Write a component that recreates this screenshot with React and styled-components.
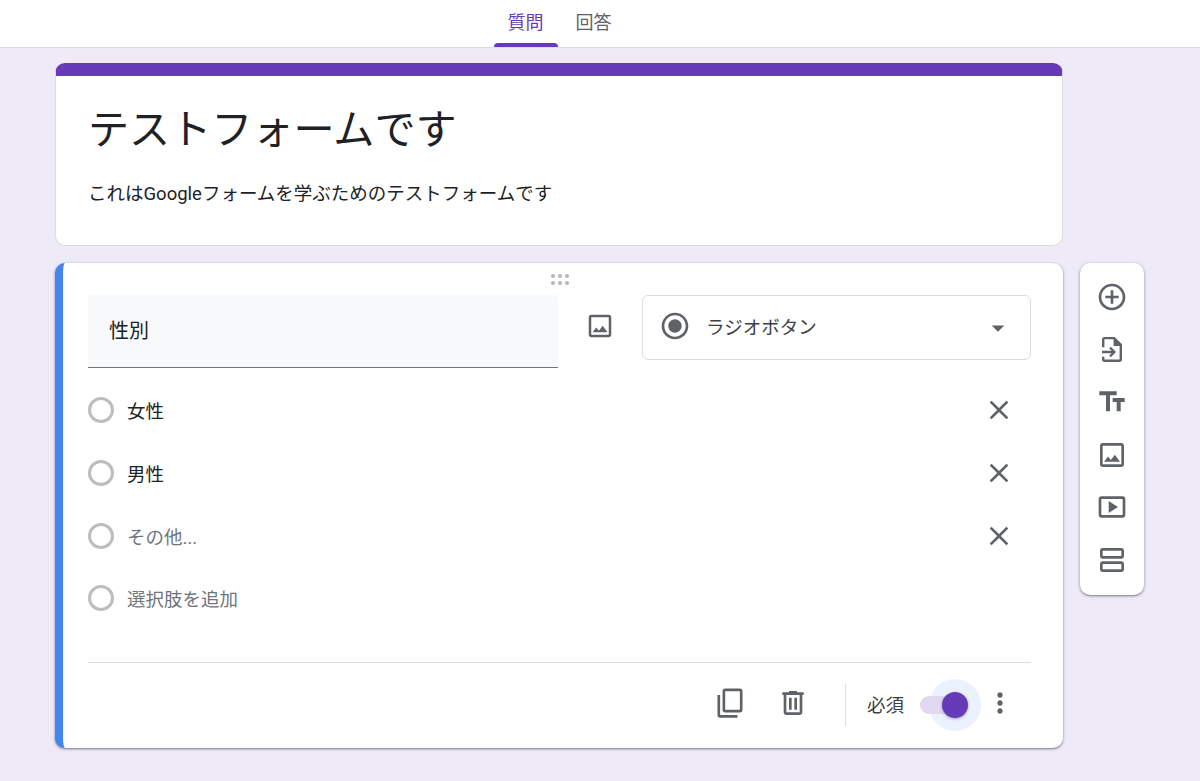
import React from 'react';
import styled, { createGlobalStyle } from 'styled-components';
import {
  MdAddCircleOutline,
  MdArrowDropDown,
  MdClose,
  MdMoreVert,
  MdOutlineImage,
  MdOutlineSmartDisplay,
  MdOutlineViewAgenda,
  MdRadioButtonChecked,
  MdTextFields,
} from 'react-icons/md';

const GlobalStyle = createGlobalStyle`
  html, body {
    margin: 0;
    height: 100%;
    background: #efeaf8;
    font-family: Roboto, "Noto Sans CJK JP", sans-serif;
    color: #202124;
    overflow: hidden;
  }
  * { box-sizing: border-box; }
`;

const Header = styled.header`
  height: 48px;
  background: #fff;
  border-bottom: 1px solid #dfdbe6;
  display: flex;
  justify-content: center;
  padding-right: 81px;
  gap: 4px;
`;

const Tab = styled.div`
  width: 64px;
  height: 47px;
  display: flex;
  justify-content: center;
  padding-top: 11px;
  font-size: 18px;
  line-height: 24px;
  position: relative;
  color: ${(p) => (p.$active ? '#673ab7' : '#5f6368')};
  ${(p) =>
    p.$active &&
    `&::after {
      content: "";
      position: absolute;
      left: 0;
      right: 0;
      bottom: 0;
      height: 4px;
      background: #673ab7;
      border-radius: 4px 4px 0 0;
    }`}
`;

const Page = styled.main`
  display: flex;
  align-items: flex-start;
  gap: 17px;
  padding: 15px 0 0 55px;
`;

const Column = styled.div`
  width: 1008px;
  display: flex;
  flex-direction: column;
  gap: 17px;
`;

const TitleCard = styled.section`
  height: 183px;
  background: #fff;
  border: 1px solid #dadce0;
  border-top: 13px solid #673ab7;
  border-radius: 10px;
  padding: 27px 32px 0;
`;

const FormTitle = styled.h1`
  margin: 0;
  font-size: 41.1px;
  line-height: 54px;
  font-weight: 400;
`;

const FormDesc = styled.p`
  margin: 24px 0 0;
  font-size: 18.5px;
  line-height: 26px;
`;

const QuestionCard = styled.section`
  height: 485px;
  background: #fff;
  border-radius: 10px;
  border-left: 8px solid #4285f4;
  box-shadow: 0 1px 2px rgba(60, 64, 67, 0.55), 0 1px 3px 1px rgba(60, 64, 67, 0.12);
  padding: 32px 32px 0 25px;
  position: relative;
`;

const DragHandle = styled.div`
  position: absolute;
  top: 11px;
  left: 488px;
  display: grid;
  grid-template-columns: repeat(3, 4px);
  gap: 3px;
`;

const Dot = styled.span`
  width: 4px;
  height: 4px;
  border-radius: 50%;
  background: #b3b5b8;
`;

const TopRow = styled.div`
  display: flex;
  align-items: flex-start;
`;

const QuestionInput = styled.div`
  width: 470px;
  height: 73px;
  background: #f8f9fa;
  border-bottom: 1px solid #70757a;
  border-radius: 4px 4px 0 0;
  padding: 22px 21px 0;
  font-size: 20px;
  line-height: 28px;
`;

const ImageButton = styled.div`
  width: 84px;
  height: 62px;
  display: flex;
  align-items: center;
  justify-content: center;
  color: #5f6368;
  font-size: 30px;
`;

const TypeSelect = styled.div`
  width: 389px;
  height: 65px;
  border: 1px solid #dadce0;
  border-radius: 6px;
  display: flex;
  align-items: center;
  padding: 0 17px 4px 16px;
  font-size: 18.5px;
  color: #3c4043;
`;

const SelectIcon = styled.span`
  display: flex;
  font-size: 32px;
  color: #5f6368;
  margin-right: 15px;
`;

const Caret = styled.span`
  display: flex;
  margin: 4px 0 0 auto;
  font-size: 30px;
  color: #5f6368;
`;

const Options = styled.div`
  margin-top: 11px;
  display: flex;
  flex-direction: column;
`;

const OptionRow = styled.div`
  height: 62.7px;
  display: flex;
  align-items: center;
  font-size: 18.5px;
  color: ${(p) => (p.$muted ? '#70757a' : '#202124')};
`;

const Radio = styled.span`
  width: 26px;
  height: 26px;
  border: 3px solid #bdbdbd;
  border-radius: 50%;
  margin-right: 13px;
`;

const RemoveButton = styled.span`
  display: flex;
  margin-left: auto;
  margin-right: 16px;
  font-size: 32px;
  color: #5f6368;
`;

const Footer = styled.div`
  margin-top: 32px;
  border-top: 1px solid #dadce0;
  height: 81px;
  display: flex;
  align-items: center;
`;

const FooterIcon = styled.span`
  display: flex;
  font-size: 32px;
  color: #5f6368;
  margin-left: ${(p) => p.$gap || 0}px;
`;

const Separator = styled.span`
  width: 1px;
  height: 42px;
  background: #dadce0;
  margin: 4px 21px 0 36.5px;
`;

const RequiredLabel = styled.span`
  font-size: 18.5px;
  color: #3c4043;
  margin-top: 2px;
`;

const Toggle = styled.span`
  position: relative;
  width: 48px;
  height: 18px;
  margin: 4px 0 0 16px;
`;

const ToggleHalo = styled.span`
  position: absolute;
  left: 9px;
  top: -17px;
  width: 52px;
  height: 52px;
  border-radius: 50%;
  background: #e8f0fe;
  opacity: 0.85;
`;

const ToggleTrack = styled.span`
  position: absolute;
  inset: 0;
  background: #e1d8f1;
  border-radius: 9px;
`;

const ToggleThumb = styled.span`
  position: absolute;
  left: 22px;
  top: -4px;
  width: 26px;
  height: 26px;
  border-radius: 50%;
  background: #673ab7;
  box-shadow: 0 1px 3px rgba(60, 64, 67, 0.4);
`;

const SideBar = styled.aside`
  width: 64px;
  height: 332px;
  margin-top: 200px;
  background: #fff;
  border-radius: 10px;
  box-shadow: 0 1px 2px rgba(60, 64, 67, 0.55), 0 1px 3px 1px rgba(60, 64, 67, 0.12);
  padding: 18px 0 0;
  display: flex;
  flex-direction: column;
  align-items: center;
  gap: 20.6px;
  font-size: 32px;
  color: #5f6368;

  svg {
    display: block;
  }
`;

const ImportIcon = () => (
  <svg width="1em" height="1em" viewBox="0 0 24 24" fill="currentColor">
    <path d="M6.5 2.25h7.5l5.5 5.5V19a2 2 0 0 1-2 2h-11a2 2 0 0 1-2-2v-2h1.8v2.2h11.4V9h-4.5V4H6.3v6H4.5V4.25a2 2 0 0 1 2-2z" />
    <path d="M4.5 12.6h7.2l-1.8-1.8 1.2-1.2 3.9 3.9-3.9 3.9-1.2-1.2 1.8-1.8H4.5z" />
  </svg>
);

const CopyIcon = () => (
  <svg width="1em" height="1em" viewBox="0 0 24 24" fill="currentColor" fillRule="evenodd">
    <path d="M8.4 1.1h11a2 2 0 0 1 2 2v14a2 2 0 0 1-2 2h-11a2 2 0 0 1-2-2v-14a2 2 0 0 1 2-2zm0 2v14h11v-14zM2.6 6h2v15h13v2h-13a2 2 0 0 1-2-2z" />
  </svg>
);

const TrashIcon = () => (
  <svg width="1em" height="1em" viewBox="0 0 24 24" fill="currentColor">
    <path d="M15 4V3H9v1H4v2h1v13c0 1.1.9 2 2 2h10c1.1 0 2-.9 2-2V6h1V4h-5zm2 15H7V6h10v13zM9 8h2v9H9zm4 0h2v9h-2z" />
  </svg>
);

const options = [
  { label: '女性', removable: true },
  { label: '男性', removable: true },
  { label: 'その他...', removable: true, muted: true },
  { label: '選択肢を追加', muted: true },
];

export default function App() {
  return (
    <>
      <GlobalStyle />
      <Header>
        <Tab $active>質問</Tab>
        <Tab>回答</Tab>
      </Header>
      <Page>
        <Column>
          <TitleCard>
            <FormTitle>テストフォームです</FormTitle>
            <FormDesc>これはGoogleフォームを学ぶためのテストフォームです</FormDesc>
          </TitleCard>
          <QuestionCard>
            <DragHandle>
              {[0, 1, 2, 3, 4, 5].map((i) => (
                <Dot key={i} />
              ))}
            </DragHandle>
            <TopRow>
              <QuestionInput>性別</QuestionInput>
              <ImageButton>
                <MdOutlineImage />
              </ImageButton>
              <TypeSelect>
                <SelectIcon>
                  <MdRadioButtonChecked />
                </SelectIcon>
                ラジオボタン
                <Caret>
                  <MdArrowDropDown />
                </Caret>
              </TypeSelect>
            </TopRow>
            <Options>
              {options.map((o) => (
                <OptionRow key={o.label} $muted={o.muted}>
                  <Radio />
                  {o.label}
                  {o.removable && (
                    <RemoveButton>
                      <MdClose />
                    </RemoveButton>
                  )}
                </OptionRow>
              ))}
            </Options>
            <Footer>
              <FooterIcon $gap={625.5}>
                <CopyIcon />
              </FooterIcon>
              <FooterIcon $gap={31}>
                <TrashIcon />
              </FooterIcon>
              <Separator />
              <RequiredLabel>必須</RequiredLabel>
              <Toggle>
                <ToggleHalo />
                <ToggleTrack />
                <ToggleThumb />
              </Toggle>
              <FooterIcon $gap={16}>
                <MdMoreVert />
              </FooterIcon>
            </Footer>
          </QuestionCard>
        </Column>
        <SideBar>
          <MdAddCircleOutline />
          <ImportIcon />
          <MdTextFields />
          <MdOutlineImage />
          <MdOutlineSmartDisplay />
          <MdOutlineViewAgenda />
        </SideBar>
      </Page>
    </>
  );
}
